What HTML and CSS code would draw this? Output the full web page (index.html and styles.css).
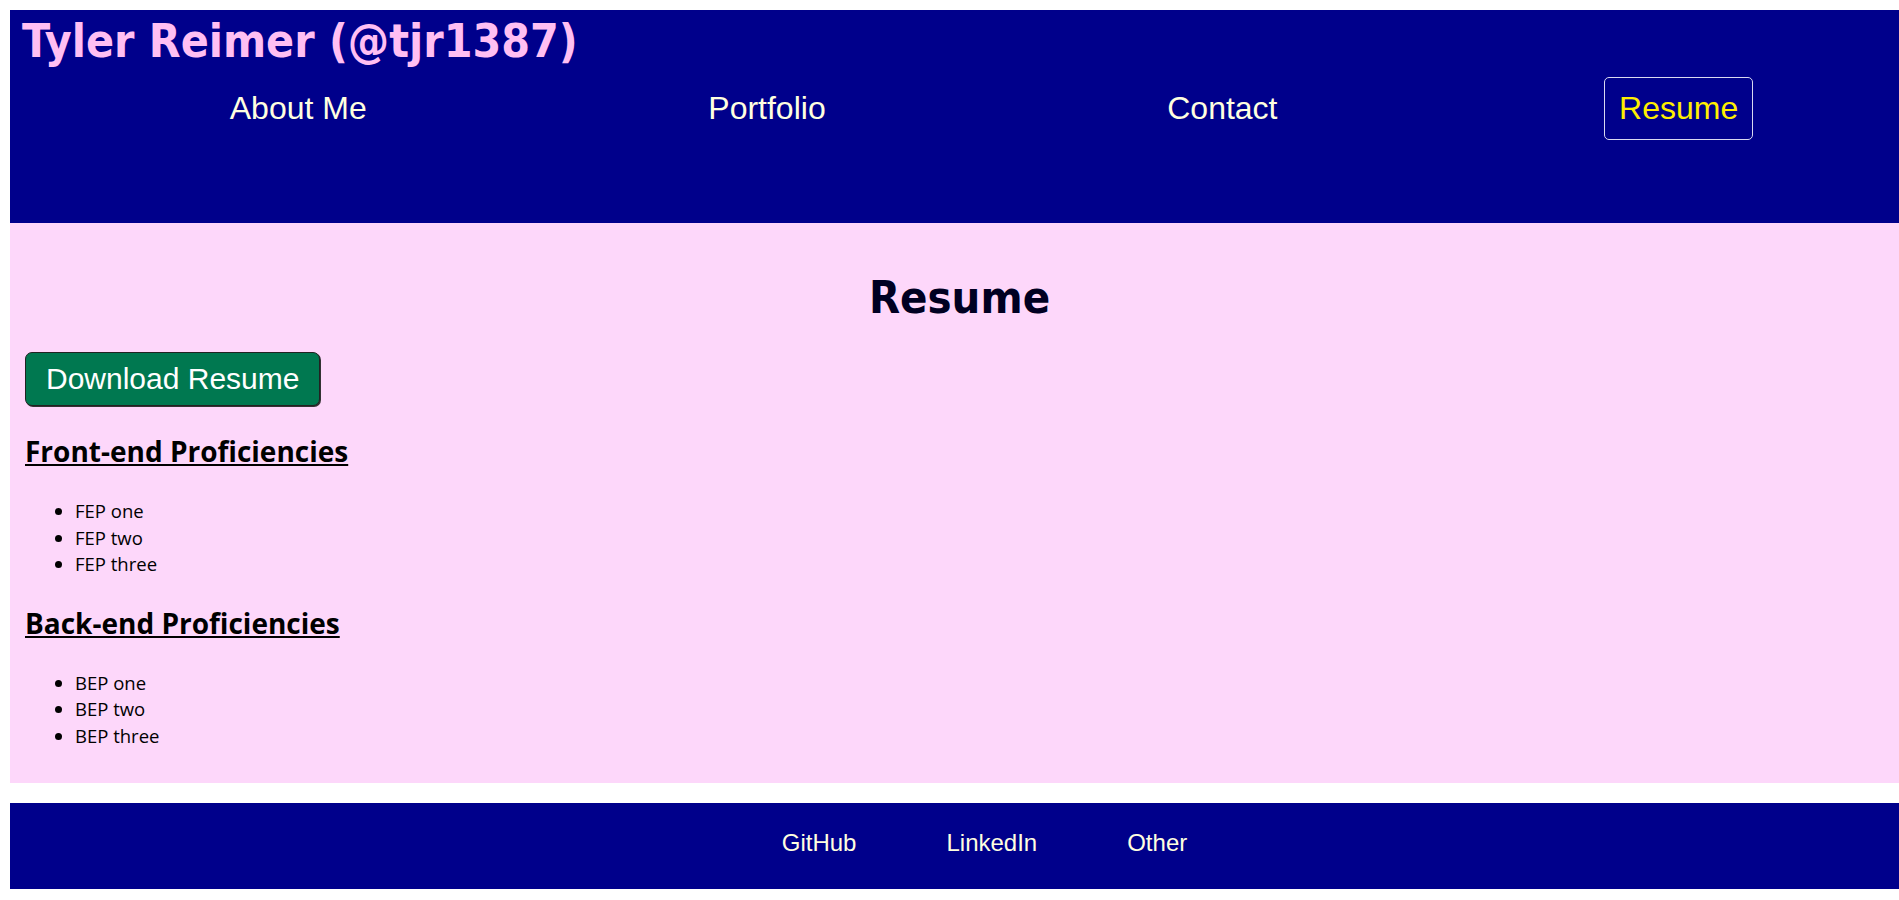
FILE: index.html
```html
<!DOCTYPE html>
<html lang="en">
<head>
<meta charset="utf-8">
<title>Tyler Reimer - Resume</title>
<link rel="stylesheet" href="styles.css">
</head>
<body>
<header class="site-header">
  <h1 class="site-title">Tyler Reimer (@tjr1387)</h1>
  <nav class="site-nav">
    <ul class="nav-list">
      <li><a class="nav-link" href="#">About Me</a></li>
      <li><a class="nav-link" href="#">Portfolio</a></li>
      <li><a class="nav-link" href="#">Contact</a></li>
      <li><a class="nav-link nav-link-active" href="#">Resume</a></li>
    </ul>
  </nav>
</header>
<main class="resume">
  <h2 class="page-title">Resume</h2>
  <a class="download-btn" href="#">Download Resume</a>
  <h3 class="section-title">Front-end Proficiencies</h3>
  <ul class="skill-list">
    <li>FEP one</li>
    <li>FEP two</li>
    <li>FEP three</li>
  </ul>
  <h3 class="section-title">Back-end Proficiencies</h3>
  <ul class="skill-list">
    <li>BEP one</li>
    <li>BEP two</li>
    <li>BEP three</li>
  </ul>
</main>
<footer class="site-footer">
  <ul class="footer-list">
    <li><a class="footer-link" href="#">GitHub</a></li>
    <li><a class="footer-link" href="#">LinkedIn</a></li>
    <li><a class="footer-link" href="#">Other</a></li>
  </ul>
</footer>
</body>
</html>
```
FILE: styles.css
```css
html {
  overflow: hidden;
}

body {
  margin: 10px 0 0 10px;
  font-family: "Open Sans", "Noto Sans", sans-serif;
  background: #ffffff;
}

.site-header {
  width: 100vw;
  box-sizing: border-box;
  background: #00008b;
  padding: 5px 0 83px 12px;
}

.site-title {
  margin: 0;
  font-family: "DejaVu Sans", sans-serif;
  font-stretch: condensed;
  font-weight: bold;
  font-size: 46px;
  line-height: 52px;
  color: #ffbff3;
}

.nav-list {
  list-style: none;
  margin: 10px 0 0 0;
  padding: 0 0 0 37px;
  display: flex;
  justify-content: space-around;
}

.nav-link {
  display: inline-block;
  font-family: "Liberation Sans", Arial, sans-serif;
  font-size: 32px;
  line-height: normal;
  color: #ffffe0;
  text-decoration: none;
  padding: 12px 14px;
  border: 1px solid transparent;
  border-radius: 5px;
}

.nav-link-active {
  color: #ffee00;
  border-color: #d8d8f0;
}

.resume {
  width: 100vw;
  box-sizing: border-box;
  background: #fdd7fa;
  padding: 49px 15px 33px;
}

.page-title {
  margin: 0 0 28px;
  text-align: center;
  font-family: "DejaVu Sans", sans-serif;
  font-stretch: condensed;
  font-weight: bold;
  font-size: 45px;
  line-height: 52px;
  color: #000022;
}

.download-btn {
  display: inline-block;
  font-family: "Liberation Sans", Arial, sans-serif;
  font-size: 30px;
  line-height: normal;
  color: #ffffff;
  background: #007850;
  text-decoration: none;
  padding: 9px 20px;
  border: 1px solid #222222;
  border-radius: 7px;
  box-shadow: 1px 1px 0 #333;
}

.section-title {
  margin: 27px 0 29px;
  font-size: 28px;
  line-height: 36px;
  font-weight: bold;
  text-decoration: underline;
  color: #000000;
}

.skill-list {
  margin: 0;
  padding-left: 50px;
  font-size: 18.5px;
  line-height: 26.6px;
  color: #000000;
}

.site-footer {
  width: 100vw;
  box-sizing: border-box;
  margin-top: 20px;
  background: #00008b;
  padding: 26px 0 33px;
}

.footer-list {
  list-style: none;
  margin: 0;
  padding: 0 0 0 50px;
  display: flex;
  justify-content: center;
  gap: 90px;
}

.footer-link {
  font-family: "Liberation Sans", Arial, sans-serif;
  font-size: 24px;
  line-height: 27.6px;
  color: #ffffe0;
  text-decoration: none;
}
```
